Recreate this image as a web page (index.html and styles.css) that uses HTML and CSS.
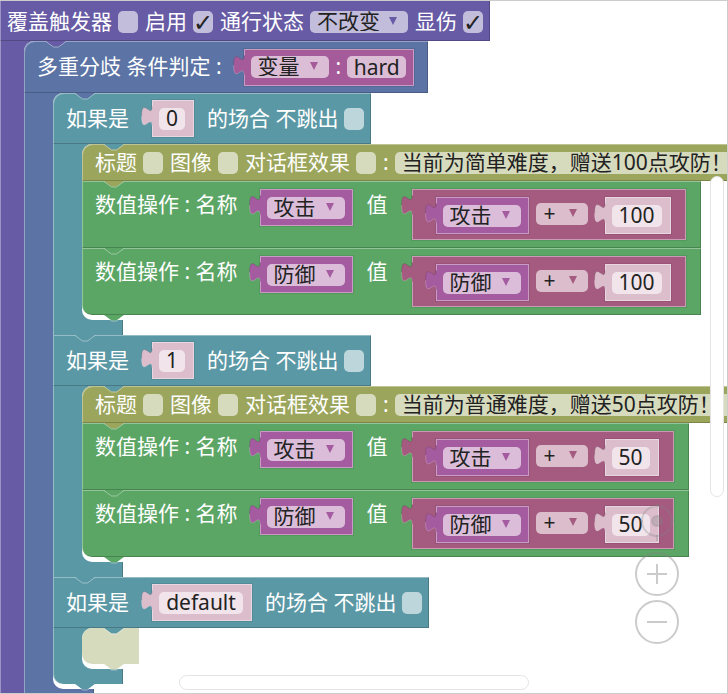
FILE: index.html
```
<!DOCTYPE html>
<html lang="zh-CN">
<head>
<meta charset="utf-8">
<title>事件编辑器</title>
<link rel="stylesheet" href="styles.css">
</head>
<body>
<svg class="defs" aria-hidden="true">
  <symbol id="notch" viewBox="0 0 20 7"><path d="M0 0 7.500 5.500H12.500L20 0Z" fill="currentColor"/><path d="M0 .5 7.500 6H12.500L20 .5" fill="none" stroke="#fff" stroke-opacity=".4"/></symbol>
  <symbol id="plug" viewBox="0 0 13 21"><path d="M13 .5H12C12 13.500 1.600 -10 1.600 10.250S12 7 12 20h1Z" fill="currentColor"/><path d="M12 .5C12 13.500 1.600 -10 1.600 10.250" fill="none" stroke="#000" stroke-opacity=".12"/><path d="M1.600 10.250C1.600 30.400 12 7 12 20" fill="none" stroke="#fff" stroke-opacity=".2"/></symbol>
  <symbol id="arrow" viewBox="0 0 8 8"><path d="M0 0H8L4 8Z" fill="currentColor"/></symbol>
</svg>
<main class="workspace">
  <section class="block event">
    <div class="head">
      <label for="cover">覆盖触发器</label><input type="checkbox" id="cover">
      <label for="enable">启用</label><input type="checkbox" id="enable" checked>
      <label for="pass">通行状态</label><span class="drop wide"><select id="pass"><option>不改变</option></select><svg><use href="#arrow"/></svg></span>
      <label for="hurt">显伤</label><input type="checkbox" id="hurt" checked>
    </div>
    <div class="body"><div class="slot">

      <section class="block switch">
        <svg class="notch"><use href="#notch"/></svg>
        <div class="head">
          <span class="text">多重分歧 条件判定 :</span>
          <div class="value variable"><svg class="plug"><use href="#plug"/></svg>
            <span class="drop"><select aria-label="类型"><option>变量</option></select><svg><use href="#arrow"/></svg></span>
            <label for="varname">:</label><input type="text" class="hard" id="varname" value="hard">
          </div>
        </div>
        <div class="body"><div class="slot">

          <section class="block case">
            <svg class="notch"><use href="#notch"/></svg>
            <div class="head">
              <label for="case0">如果是</label>
              <div class="value number"><svg class="plug"><use href="#plug"/></svg><input type="text" class="digit" id="case0" value="0"></div>
              <label for="stay0" class="after">的场合 不跳出</label><input type="checkbox" id="stay0">
            </div>
            <div class="body"><div class="slot">
              <section class="block say">
                <svg class="notch"><use href="#notch"/></svg>
                <div class="head">
                  <label for="title0">标题</label><input type="checkbox" id="title0">
                  <label for="image0">图像</label><input type="checkbox" id="image0">
                  <label for="effect0">对话框效果</label><input type="checkbox" id="effect0">
                  <label for="text0">:</label><input type="text" class="long" id="text0" value="当前为简单难度，赠送100点攻防！">
                </div>
              </section>
              <section class="block set after-say">
                <svg class="notch"><use href="#notch"/></svg>
                <div class="head">
                  <span class="text">数值操作 : 名称</span>
                  <div class="value name"><svg class="plug"><use href="#plug"/></svg><span class="drop"><select aria-label="名称"><option>攻击</option></select><svg><use href="#arrow"/></svg></span></div>
                  <span class="text after">值</span>
                  <div class="value formula"><svg class="plug"><use href="#plug"/></svg>
                    <div class="value name"><svg class="plug"><use href="#plug"/></svg><span class="drop"><select aria-label="名称"><option>攻击</option></select><svg><use href="#arrow"/></svg></span></div>
                    <span class="drop op"><select aria-label="运算符"><option>+</option></select><svg><use href="#arrow"/></svg></span>
                    <div class="value number"><svg class="plug"><use href="#plug"/></svg><input type="text" class="hundred" aria-label="数值" value="100"></div>
                  </div>
                </div>
              </section>
              <section class="block set last">
                <svg class="notch"><use href="#notch"/></svg>
                <div class="head">
                  <span class="text">数值操作 : 名称</span>
                  <div class="value name"><svg class="plug"><use href="#plug"/></svg><span class="drop"><select aria-label="名称"><option>防御</option></select><svg><use href="#arrow"/></svg></span></div>
                  <span class="text after">值</span>
                  <div class="value formula"><svg class="plug"><use href="#plug"/></svg>
                    <div class="value name"><svg class="plug"><use href="#plug"/></svg><span class="drop"><select aria-label="名称"><option>防御</option></select><svg><use href="#arrow"/></svg></span></div>
                    <span class="drop op"><select aria-label="运算符"><option>+</option></select><svg><use href="#arrow"/></svg></span>
                    <div class="value number"><svg class="plug"><use href="#plug"/></svg><input type="text" class="hundred" aria-label="数值" value="100"></div>
                  </div>
                </div>
                <svg class="notch tail"><use href="#notch"/></svg>
              </section>
            </div></div>
            <div class="foot"></div>
          </section>

          <section class="block case next">
            <svg class="notch"><use href="#notch"/></svg>
            <div class="head">
              <label for="case1">如果是</label>
              <div class="value number"><svg class="plug"><use href="#plug"/></svg><input type="text" class="digit" id="case1" value="1"></div>
              <label for="stay1" class="after">的场合 不跳出</label><input type="checkbox" id="stay1">
            </div>
            <div class="body"><div class="slot">
              <section class="block say">
                <svg class="notch"><use href="#notch"/></svg>
                <div class="head">
                  <label for="title1">标题</label><input type="checkbox" id="title1">
                  <label for="image1">图像</label><input type="checkbox" id="image1">
                  <label for="effect1">对话框效果</label><input type="checkbox" id="effect1">
                  <label for="text1">:</label><input type="text" class="long" id="text1" value="当前为普通难度，赠送50点攻防！">
                </div>
              </section>
              <section class="block set after-say">
                <svg class="notch"><use href="#notch"/></svg>
                <div class="head">
                  <span class="text">数值操作 : 名称</span>
                  <div class="value name"><svg class="plug"><use href="#plug"/></svg><span class="drop"><select aria-label="名称"><option>攻击</option></select><svg><use href="#arrow"/></svg></span></div>
                  <span class="text after">值</span>
                  <div class="value formula"><svg class="plug"><use href="#plug"/></svg>
                    <div class="value name"><svg class="plug"><use href="#plug"/></svg><span class="drop"><select aria-label="名称"><option>攻击</option></select><svg><use href="#arrow"/></svg></span></div>
                    <span class="drop op"><select aria-label="运算符"><option>+</option></select><svg><use href="#arrow"/></svg></span>
                    <div class="value number"><svg class="plug"><use href="#plug"/></svg><input type="text" class="fifty" aria-label="数值" value="50"></div>
                  </div>
                </div>
              </section>
              <section class="block set last">
                <svg class="notch"><use href="#notch"/></svg>
                <div class="head">
                  <span class="text">数值操作 : 名称</span>
                  <div class="value name"><svg class="plug"><use href="#plug"/></svg><span class="drop"><select aria-label="名称"><option>防御</option></select><svg><use href="#arrow"/></svg></span></div>
                  <span class="text after">值</span>
                  <div class="value formula"><svg class="plug"><use href="#plug"/></svg>
                    <div class="value name"><svg class="plug"><use href="#plug"/></svg><span class="drop"><select aria-label="名称"><option>防御</option></select><svg><use href="#arrow"/></svg></span></div>
                    <span class="drop op"><select aria-label="运算符"><option>+</option></select><svg><use href="#arrow"/></svg></span>
                    <div class="value number"><svg class="plug"><use href="#plug"/></svg><input type="text" class="fifty" aria-label="数值" value="50"></div>
                  </div>
                </div>
                <svg class="notch tail"><use href="#notch"/></svg>
              </section>
            </div></div>
            <div class="foot"></div>
          </section>

          <section class="block case next last">
            <svg class="notch"><use href="#notch"/></svg>
            <div class="head">
              <label for="case2">如果是</label>
              <div class="value number"><svg class="plug"><use href="#plug"/></svg><input type="text" class="word" id="case2" value="default"></div>
              <label for="stay2" class="after">的场合 不跳出</label><input type="checkbox" id="stay2">
            </div>
            <div class="body"><div class="slot">
              <section class="block ghost last">
                <svg class="notch"><use href="#notch"/></svg>
                <svg class="notch tail"><use href="#notch"/></svg>
              </section>
            </div></div>
            <div class="foot"></div>
            <svg class="notch tail"><use href="#notch"/></svg>
          </section>

        </div></div>
        <div class="foot"></div>
      </section>

    </div></div>
  </section>

  <div class="scroll vertical"></div>
  <div class="scroll horizontal"></div>
  <div class="tools">
    <button type="button" class="center" aria-label="居中"><svg viewBox="0 0 44 44"><circle cx="22" cy="17" r="15"/><circle class="dot" cx="22" cy="17" r="5"/><path d="M22 0v3M22 31v6M4 17h4M36 17h4"/></svg></button>
    <button type="button" aria-label="放大"><svg viewBox="0 0 44 44"><circle cx="22" cy="22" r="21"/><path d="M12 22H32M22 12V32"/></svg></button>
    <button type="button" aria-label="缩小"><svg viewBox="0 0 44 44"><circle cx="22" cy="22" r="21"/><path d="M12 22H32"/></svg></button>
  </div>
</main>
</body>
</html>
```
FILE: styles.css
```
* { box-sizing: border-box; }

body {
  margin: 0;
  background: #fff;
  color: #fff;
  font: 21px/22px "Noto Sans", "Noto Sans CJK SC", sans-serif;
}

.defs { position: absolute; width: 0; height: 0; }

.workspace {
  position: relative;
  height: 100vh;
  overflow: hidden;
}

.workspace::after {
  content: "";
  position: absolute;
  inset: 0;
  border: solid #ccc;
  border-width: 1px 1px 1px 0;
  pointer-events: none;
}

/* Blocks */
.block {
  position: relative;
  width: max-content;
}

.event { --fill: #675ba5; --above: #675ba5; }
.switch { --fill: #5b73a5; --above: #675ba5; }
.case { --fill: #5b98a5; --above: #5b73a5; }
.say { --fill: #9ba55b; --above: #5b98a5; }
.set { --fill: #5ba565; --above: #5ba565; }
.next { --above: #5b98a5; }
.after-say { --above: #9ba55b; }
.ghost { --fill: #d7dbbd; --above: #5b98a5; }

.head {
  display: flex;
  align-items: center;
  gap: 6px;
  width: max-content;
  min-height: 51px;
  padding: 7px 7px 7px 12px;
  background: var(--fill);
  box-shadow: inset 1px 1px rgb(255 255 255 / 35%), inset -1px -1px rgb(0 0 0 / 20%);
  white-space: nowrap;
}

.event > .head { min-height: 41px; padding: 10px 7px 7px 6px; }
.switch > .head { min-height: 52px; padding-right: 14px; border-top-left-radius: 10px; }
.say > .head { min-height: 37px; padding-top: 6px; padding-bottom: 6px; border-top-left-radius: 10px; }
.set > .head { min-height: 67px; align-items: flex-start; padding: 8px 15px 8px 12px; }
.set.last > .head { border-bottom-left-radius: 10px; }
.case:not(.next) > .head { border-top-left-radius: 10px; }

.body {
  width: max-content;
  padding-left: 29px;
  background: linear-gradient(var(--fill), var(--fill)) no-repeat 0 0 / 41px 100%;
  box-shadow: inset 1px 0 rgb(255 255 255 / 35%);
}

.event > .body { min-height: 100vh; padding-left: 24px; background-size: 36px 100%; }

.slot {
  padding-bottom: 5px;
  background: #fff;
  border-radius: 10px 0 0 10px;
}

.foot {
  width: 70px;
  height: 15px;
  background: var(--fill);
  box-shadow: inset 1px 0 rgb(255 255 255 / 35%), inset -1px 0 rgb(0 0 0 / 20%);
}

.case.last > .foot { border-bottom-left-radius: 10px; }

.ghost { width: 57px; height: 36px; background: var(--fill); border-radius: 10px 0 0 10px; }

.notch {
  position: absolute;
  z-index: 1;
  top: 0;
  left: 22px;
  width: 20px;
  height: 7px;
  color: var(--above);
}

.notch.tail { top: 100%; color: var(--fill); }

/* Value blocks plugged into a row */
.value {
  position: relative;
  display: flex;
  align-items: center;
  gap: 6px;
  height: 37px;
  margin-left: 16px;
  padding: 0 8px 0 7px;
  background: var(--fill);
  box-shadow: inset 0 0 0 1px rgb(255 255 255 / 40%), 0 0 0 1px rgb(0 0 0 / 8%);
}

.variable { --fill: #a55b99; }
.name { --fill: #a55ba0; }
.formula { --fill: #a55b80; }
.number { --fill: #dbbdcc; padding-right: 9px; }
.head > .number { margin-left: 17px; }

.value.formula {
  align-items: flex-start;
  gap: 7px;
  height: 51px;
  margin-left: 18px;
  padding: 8px 15px 8px 8px;
}

.formula > .drop { margin-top: 6px; }
.formula > .number { margin-left: 10px; }

.plug {
  position: absolute;
  top: 6px;
  left: -12px;
  width: 13px;
  height: 21px;
  color: var(--fill);
}

label, .text { padding: 0 0 2px 1px; white-space: pre; }
.set > .head > .text { line-height: 30px; }
.after { margin-left: 6px; }
.set .after { margin-left: 7px; }

/* Fields */
input, select {
  margin: 0;
  border: 0;
  border-radius: 5px;
  background: rgb(255 255 255 / 60%);
  color: #222;
  font: inherit;
  appearance: none;
}

input[type="text"] { height: 22px; padding: 0 0 1px; text-align: center; }
input.digit { width: 26px; }
input.fifty { width: 38px; }
input.hundred { width: 50px; }
input.hard { width: 59px; }
input.word { width: 84px; }
input.long { width: 336px; padding: 0 7px 2px; text-align: left; }

input[type="checkbox"] { position: relative; width: 20px; height: 22px; }

input[type="checkbox"]:checked::after {
  content: "✓";
  position: absolute;
  inset: 0;
  font: 24px/24px "DejaVu Sans", sans-serif;
  text-align: center;
}

.drop { position: relative; display: block; width: 78px; height: 22px; }
.drop.wide { width: 98px; }
.drop.op { width: 52px; }
.drop select { display: block; width: 100%; height: 22px; padding: 0 7px 2px; line-height: 20px; }
.drop.op select { padding-left: 8px; }
.drop svg {
  position: absolute;
  top: 6px;
  right: 11px;
  width: 8px;
  height: 8px;
  color: var(--fill);
  pointer-events: none;
}

/* Overlays */
.scroll {
  position: absolute;
  z-index: 2;
  border: 1px solid #e4e4e4;
  border-radius: 8px;
  background: #fff;
}

.vertical { top: 176px; right: 4px; width: 14px; height: 321px; }
.horizontal { bottom: 4px; left: 179px; width: 350px; height: 15px; }

.tools {
  position: absolute;
  z-index: 3;
  right: 49px;
  bottom: 50px;
  display: grid;
  gap: 4px;
}

.tools button {
  width: 44px;
  height: 44px;
  padding: 0;
  border: 0;
  background: none;
}

.tools svg { display: block; width: 100%; height: 100%; }
.tools circle, .tools path { fill: none; stroke: rgb(130 130 130 / 42%); stroke-width: 2; }
.tools .center { opacity: .7; }
.tools .dot { fill: rgb(130 130 130 / 42%); }
```
